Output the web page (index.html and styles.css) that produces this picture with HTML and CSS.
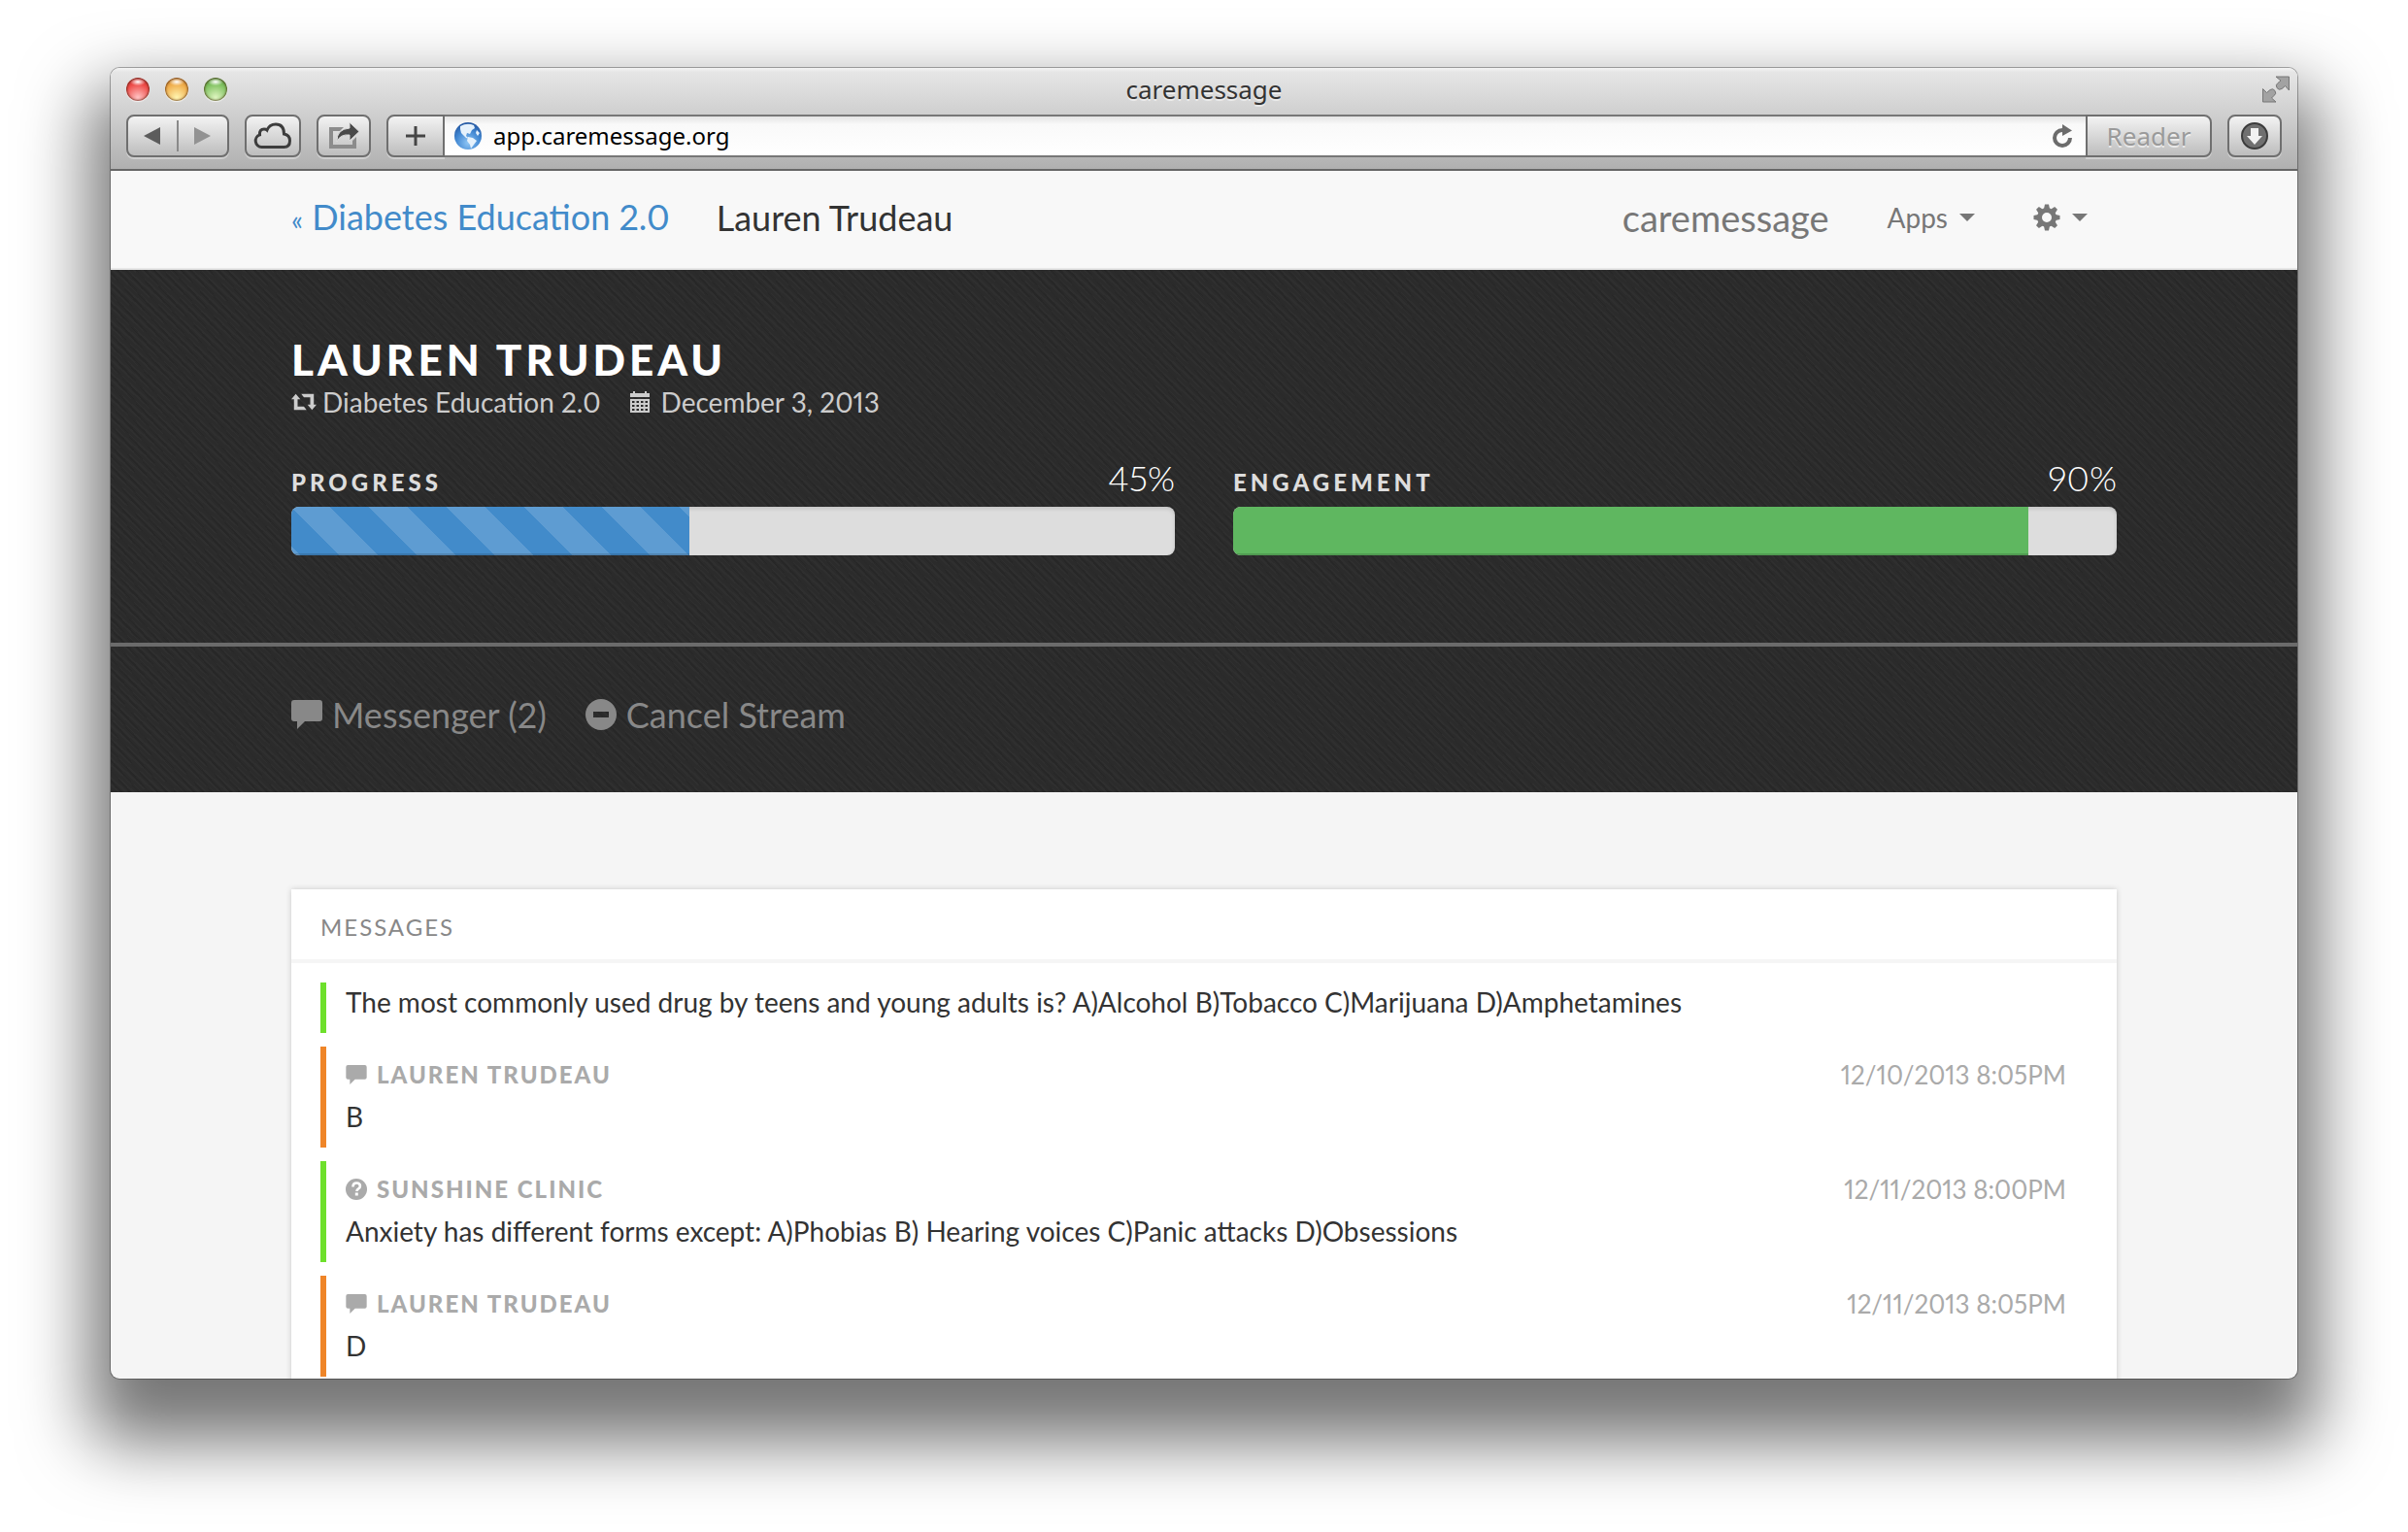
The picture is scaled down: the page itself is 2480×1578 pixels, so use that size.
FILE: index.html
```html
<!DOCTYPE html>
<html lang="en">
<head>
<meta charset="utf-8">
<title>caremessage</title>
<link rel="stylesheet" href="styles.css">
</head>
<body>
<svg class="sprite" aria-hidden="true">
  <symbol id="comment" viewBox="0 0 32 30"><path d="M3 0h26a3 3 0 0 1 3 3v16a3 3 0 0 1-3 3H14l-8 8v-8H3a3 3 0 0 1-3-3V3a3 3 0 0 1 3-3z"/></symbol>
</svg>
<div class="window">
  <header class="chrome">
    <div class="titlebar">
      <div class="lights">
        <button class="light light-close" aria-label="Close"></button>
        <button class="light light-min" aria-label="Minimize"></button>
        <button class="light light-zoom" aria-label="Zoom"></button>
      </div>
      <div class="window-title">caremessage</div>
      <button class="fullscreen" aria-label="Full screen">
        <svg width="28" height="28" viewBox="0 0 28 28" fill="#a2a2a2" stroke="#777" stroke-width="1"><path d="M14 1h13.500v14l-4-4.500-3.500 3q-3 2-5-1t1-5l3-2.500z"/><path d="M14 27H.5V13.500l4 4 3.500-3q3-2 5 1t-1 5l-2.500 2.500z"/></svg>
      </button>
    </div>
    <div class="toolbar">
      <div class="tool tool-nav">
        <button class="arrow" aria-label="Back"><svg width="18" height="20" viewBox="0 0 18 20"><path d="M0 10L17 1v18z" fill="#5c5c5c"/></svg></button>
        <button class="arrow arrow-next" aria-label="Forward"><svg width="18" height="20" viewBox="0 0 18 20"><path d="M17 10L0 1v18z" fill="#929292"/></svg></button>
      </div>
      <button class="tool tool-cloud" aria-label="iCloud tabs">
        <svg width="40" height="28" viewBox="0 0 40 28" fill="none" stroke="#3d3d3d" stroke-width="3"><path d="M8.500 25.500a6.500 6.500 0 0 1-2-12.600Q6 7 11 7q2 0 3 1 2.500-6 9-6 8.500 0 8.500 10 6 1 6 7 0 6.500-6 6.500z"/></svg>
      </button>
      <button class="tool tool-share" aria-label="Share">
        <svg width="34" height="28" viewBox="0 0 34 28"><path d="M2 5h15l-4 4H6v14h20v-4l4-4v12H2z" fill="#8c8c8c"/><path d="M23 0l10 9.500L23 19v-6Q13 12 10 20 9.500 7 23 6z" fill="#494949" stroke="#dcdcdc"/></svg>
      </button>
      <div class="address">
        <button class="tool tool-add" aria-label="Add bookmark"><svg width="20" height="20" viewBox="0 0 20 20"><path d="M8.500 0h3v8.500H20v3h-8.500V20h-3v-8.500H0v-3h8.500z" fill="#454545"/></svg></button>
        <div class="field">
          <svg width="28" height="28" viewBox="0 0 28 28"><defs><radialGradient id="sea" cx=".5" cy=".75" r=".75"><stop offset="0" stop-color="#8fc6f5"/><stop offset=".6" stop-color="#4187d2"/><stop offset="1" stop-color="#23559f"/></radialGradient></defs><circle cx="14" cy="14" r="14" fill="url(#sea)"/><path d="M6 4q7-4 14-1l1 3-3 2-2 4-3-1-1 3 3 3-3-1-5-5-1-4zM14 15l5 1 4 3-3 4-3 4-1-4-3-4zM23 8l3 3-2 3-2-3z" fill="#e6f2fc"/></svg>
          <input class="url" type="text" aria-label="Address" value="app.caremessage.org">
          <button class="reload" aria-label="Reload"><svg width="20" height="24" viewBox="0 0 20 24"><path d="M18 14a8 8 0 1 1-8-8h2" fill="none" stroke="#6c6c6c" stroke-width="4"/><path d="M10 0l10 6.500L10 12z" fill="#6c6c6c"/></svg></button>
        </div>
        <button class="tool tool-reader">Reader</button>
      </div>
      <button class="tool tool-download" aria-label="Downloads">
        <svg width="28" height="28" viewBox="0 0 28 28"><circle cx="14" cy="14" r="13" fill="#707070" stroke="#3c3c3c" stroke-width="2"/><path d="M10 6h8v8h4l-8 9-8-9h4z" fill="#f2f2f2"/></svg>
      </button>
    </div>
  </header>

  <nav class="nav">
    <a class="crumb" href="#"><span class="laquo">«</span> Diabetes Education 2.0</a>
    <span class="current">Lauren Trudeau</span>
    <a class="brand" href="#">caremessage</a>
    <a class="menu menu-apps" href="#">Apps <i class="caret"></i></a>
    <a class="menu" href="#" aria-label="Settings">
      <svg class="gear" width="28" height="28" viewBox="-14 -14 28 28"><g fill="#777"><path fill-rule="evenodd" d="M0-10a10 10 0 1 0 0 20a10 10 0 1 0 0-20zM0-5a5 5 0 1 1 0 10a5 5 0 1 1 0-10z"/><path id="tooth" d="M-3-9l1-4.500h4l1 4.500z"/><use href="#tooth" transform="rotate(45)"/><use href="#tooth" transform="rotate(90)"/><use href="#tooth" transform="rotate(135)"/><use href="#tooth" transform="rotate(180)"/><use href="#tooth" transform="rotate(225)"/><use href="#tooth" transform="rotate(270)"/><use href="#tooth" transform="rotate(315)"/></g></svg>
      <i class="caret"></i>
    </a>
  </nav>

  <section class="hero">
    <div class="summary">
      <h1 class="name">Lauren Trudeau</h1>
      <div class="meta">
        <span class="meta-item"><svg width="26" height="18" viewBox="0 0 28 18" fill="#ccc"><path d="M5 0l5 6H7v8h7l3 4H3V6H0zM11 0h14v12h3l-5 6-5-6h3V4h-7z"/></svg>Diabetes Education 2.0</span>
        <span class="meta-item meta-date"><svg width="20" height="22" viewBox="0 0 20 22"><path d="M0 2h3V0h2v2h10V0h2v2h3v4H0zM0 8h20v14H0z" fill="#ccc"/><path d="M2 11h16M2 15h16M2 19h16" stroke="#2a2a2a" stroke-width="2" stroke-dasharray="2.500 2"/></svg>December 3, 2013</span>
      </div>
      <div class="meters">
        <div class="meter">
          <div class="meter-head"><span class="meter-label" id="progress-label">Progress</span><span class="meter-value">45%</span></div>
          <div class="track" role="progressbar" aria-labelledby="progress-label" aria-valuenow="45"><div class="fill fill-blue" style="width:45%"></div></div>
        </div>
        <div class="meter">
          <div class="meter-head"><span class="meter-label" id="engagement-label">Engagement</span><span class="meter-value">90%</span></div>
          <div class="track" role="progressbar" aria-labelledby="engagement-label" aria-valuenow="90"><div class="fill fill-green" style="width:90%"></div></div>
        </div>
      </div>
    </div>
    <div class="actions">
      <a class="action" href="#"><svg width="32" height="30"><use href="#comment"/></svg>Messenger (2)</a>
      <a class="action" href="#"><svg width="32" height="32" viewBox="0 0 32 32"><path fill-rule="evenodd" d="M16 0a16 16 0 1 0 0 32a16 16 0 1 0 0-32zM8 13h16v6H8z"/></svg>Cancel Stream</a>
    </div>
  </section>

  <main class="content">
    <section class="card">
      <h2 class="card-title">Messages</h2>
      <div class="messages">
        <article class="message out">
          <p class="text">The most commonly used drug by teens and young adults is? A)Alcohol B)Tobacco C)Marijuana D)Amphetamines</p>
        </article>
        <article class="message in">
          <header class="from"><svg width="22" height="20"><use href="#comment"/></svg><h3 class="sender">Lauren Trudeau</h3><time class="time">12/10/2013 8:05PM</time></header>
          <p class="text">B</p>
        </article>
        <article class="message out">
          <header class="from"><svg width="22" height="22" viewBox="0 0 22 22"><circle cx="11" cy="11" r="11"/><path d="M7.500 8.500q0-4 3.700-4t3.700 3.200q0 2-2 3-1.400.8-1.400 2.300" fill="none" stroke="#fff" stroke-width="2.600"/><path d="M9.800 14.500h3v3h-3z" fill="#fff"/></svg><h3 class="sender">Sunshine Clinic</h3><time class="time">12/11/2013 8:00PM</time></header>
          <p class="text">Anxiety has different forms except: A)Phobias B) Hearing voices C)Panic attacks D)Obsessions</p>
        </article>
        <article class="message in">
          <header class="from"><svg width="22" height="20"><use href="#comment"/></svg><h3 class="sender">Lauren Trudeau</h3><time class="time">12/11/2013 8:05PM</time></header>
          <p class="text">D</p>
        </article>
      </div>
    </section>
  </main>
</div>
</body>
</html>
```
FILE: styles.css
```css
* { box-sizing: border-box; }

body {
  margin: 0;
  height: 100vh;
  padding: 70px 114px 158px;
  display: flex;
  flex-direction: column;
  overflow: hidden;
  background: #fff;
  color: #333;
  font: 28px/40px Lato, "Liberation Sans", sans-serif;
  font-variant-numeric: proportional-nums;
}

button, input { margin: 0; padding: 0; border: 0; background: none; font: inherit; color: inherit; }
h1, h2, h3, p { margin: 0; font-size: inherit; font-weight: inherit; }
a { text-decoration: none; color: inherit; }
svg { flex: none; display: block; }
.sprite { position: absolute; width: 0; height: 0; }

.window {
  flex: 1;
  min-height: 0;
  display: flex;
  flex-direction: column;
  overflow: hidden;
  border-radius: 9px;
  background: #f5f5f5;
  box-shadow: 0 0 0 1px rgba(0, 0, 0, .3), 0 44px 70px 22px rgba(0, 0, 0, .54);
}
.window > * { flex: none; }

/* Browser chrome */
.chrome {
  border-bottom: 2px solid #666;
  background: linear-gradient(#f4f4f4, #e6e6e6 4px, #cfcfcf 48px, #b0b0b0);
  font-family: "Noto Sans", "Open Sans", sans-serif;
}
.titlebar {
  display: grid;
  grid-template-columns: 1fr auto 1fr;
  align-items: center;
  height: 48px;
  padding: 0 8px 4px;
}
.lights { display: flex; gap: 16px; margin-left: 8px; }
.light { width: 24px; height: 24px; border-radius: 50%; box-shadow: inset 0 0 2px 1px rgba(60, 20, 0, .6), 0 1px 1px #f4f4f4; }
.light-close { background: radial-gradient(ellipse 8px 4px at 50% 18%, #fff, transparent), radial-gradient(circle at 50% 85%, #ffc4c4, #ee4b48 60%, #b62a2a); }
.light-min { background: radial-gradient(ellipse 8px 4px at 50% 18%, #fff, transparent), radial-gradient(circle at 50% 85%, #fff5b0, #f0ad4b 60%, #b9742a); }
.light-zoom { background: radial-gradient(ellipse 8px 4px at 50% 18%, #fff, transparent), radial-gradient(circle at 50% 85%, #dff5c0, #7fc160 60%, #4a8a33); }
.window-title { color: #333; font-size: 26px; text-shadow: 0 2px 0 rgba(255, 255, 255, .5); }
.fullscreen { justify-self: end; }

.toolbar { display: flex; gap: 16px; height: 56px; padding: 0 16px 12px; }
.tool {
  display: flex;
  align-items: center;
  justify-content: center;
  height: 44px;
  border: 2px solid #6f6f6f;
  border-radius: 8px;
  background: linear-gradient(#f3f3f3, #bdbdbd);
  box-shadow: 0 2px 0 rgba(255, 255, 255, .35);
}
.tool-nav { width: 106px; }
.arrow { flex: 1; display: flex; justify-content: center; height: 32px; align-items: center; }
.arrow-next { border-left: 2px solid #8a8a8a; }
.tool-cloud { width: 58px; }
.tool-share, .tool-download { width: 56px; }
.address { flex: 1; display: flex; }
.tool-add { width: 60px; border-radius: 8px 0 0 8px; }
.tool-reader { width: 130px; border-radius: 0 8px 8px 0; color: #9a9a9a; font-size: 26px; text-shadow: 0 2px 0 rgba(255, 255, 255, .6); }
.field {
  flex: 1;
  display: flex;
  align-items: center;
  gap: 12px;
  padding: 0 14px 0 10px;
  border: solid #777;
  border-width: 2px 0;
  background: linear-gradient(#e4e4e4, #f9f9f9 8px, #fff);
}
.url { flex: 1; color: #000; font-size: 24px; line-height: 32px; }

/* Page navigation */
.nav {
  display: flex;
  align-items: center;
  height: 102px;
  padding: 0 216px 4px 186px;
  border-bottom: 2px solid #e7e7e7;
  background: #f8f8f8;
  color: #777;
}
.crumb { color: #428bca; font-size: 36px; }
.laquo { font-size: 28px; }
.current { margin-left: 48px; color: #333; font-size: 36px; }
.brand { margin-left: auto; font-size: 38px; }
.menu { display: flex; align-items: center; gap: 12px; margin-left: 60px; }
.caret { border: solid transparent; border-width: 8px 8px 0; border-top-color: #777; }

/* Dark header */
.hero {
  background:
    repeating-linear-gradient(48deg, rgba(0, 0, 0, .1) 0 2px, transparent 2px 7px),
    repeating-linear-gradient(42deg, rgba(255, 255, 255, .02) 0 2px, transparent 2px 5px),
    #2b2b2b;
}
.summary { padding: 68px 186px 90px; border-bottom: 4px solid #6b6b6b; }
.name { color: #fff; font-size: 44px; line-height: 48px; font-weight: 900; letter-spacing: 4px; text-transform: uppercase; }
.meta { display: flex; gap: 30px; color: #ccc; }
.meta-item { display: flex; align-items: center; gap: 6px; }
.meta-date { gap: 12px; }
.meters { display: grid; grid-template-columns: 1fr 1fr; gap: 60px; margin-top: 38px; }
.meter-head { display: flex; align-items: baseline; justify-content: space-between; height: 40px; margin-bottom: 10px; }
.meter-label { color: #ddd; font-size: 24px; font-weight: 900; letter-spacing: 4px; text-transform: uppercase; }
.meter-value { color: #fff; font-size: 36px; font-weight: 300; }
.track { height: 50px; border-radius: 8px; overflow: hidden; background: #ddd; box-shadow: inset 0 2px 4px rgba(0, 0, 0, .12); }
.fill { height: 100%; box-shadow: inset 0 -2px 0 rgba(0, 0, 0, .15); }
.fill-blue {
  background: linear-gradient(45deg, rgba(255, 255, 255, .15) 25%, transparent 25% 50%, rgba(255, 255, 255, .15) 50% 75%, transparent 75%) 0 0 / 80px 80px #428bca;
}
.fill-green { background: #5fb760; }

.actions { display: flex; gap: 40px; padding: 50px 186px 60px; }
.action { display: flex; align-items: center; gap: 10px; color: #888; fill: #888; font-size: 36px; }

/* Message list */
.content { padding: 100px 186px; }
.card { background: #fff; box-shadow: 0 0 6px rgba(0, 0, 0, .18); }
.card-title { padding: 24px 30px 18px; border-bottom: 4px solid #f5f5f5; color: #888; font-size: 24px; line-height: 30px; letter-spacing: 2px; text-transform: uppercase; }
.messages { display: grid; gap: 14px; padding: 20px 30px; }
.message { padding: 0 22px 12px 20px; border-left: 6px solid; }
.out { border-color: #6ee02c; }
.in { border-color: #ef8528; }
.from { display: flex; align-items: center; gap: 10px; padding-top: 6px; color: #aaa; fill: #aaa; line-height: 46px; }
.sender { font-size: 24px; font-weight: 900; letter-spacing: 2px; text-transform: uppercase; }
.time { margin-left: auto; font-size: 26px; }
```
